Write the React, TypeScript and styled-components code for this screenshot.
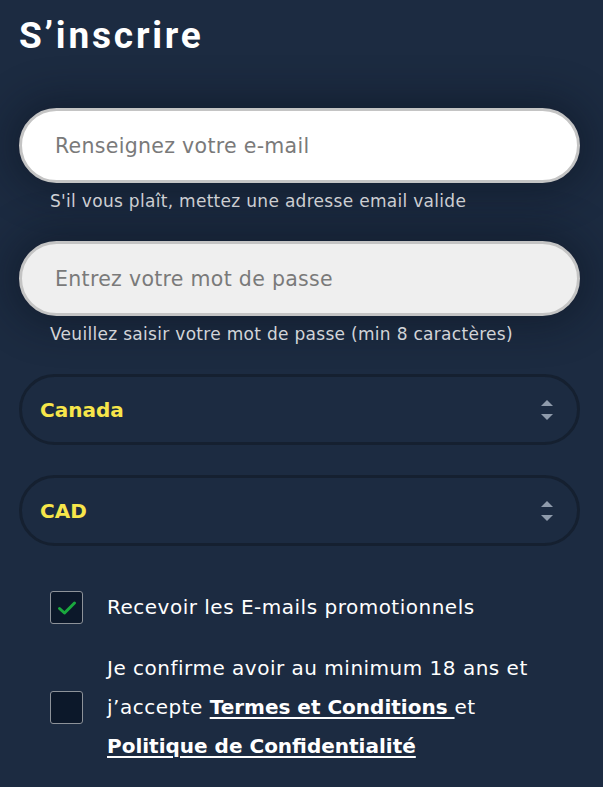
import React from 'react';
import styled, { createGlobalStyle } from 'styled-components';

const GlobalStyle = createGlobalStyle`
  html, body {
    margin: 0;
    padding: 0;
    background: #1c2b41;
  }
  body {
    font-family: "DejaVu Sans", Roboto, sans-serif;
    color: #fff;
  }
`;

const Page = styled.div`
  width: 603px;
  height: 787px;
  overflow: hidden;
  box-sizing: border-box;
  padding: 0 23px 0 19px;
  background: #1c2b41;
`;

const Title = styled.h1`
  margin: 0;
  padding-top: 14px;
  font-family: Roboto, sans-serif;
  font-size: 37px;
  font-weight: 700;
  letter-spacing: 2.8px;
  line-height: 44px;
  color: #fff;
`;

const Form = styled.form`
  display: flex;
  flex-direction: column;
  margin-top: 50px;
`;

const Field = styled.div<{ $gap?: number }>`
  display: flex;
  flex-direction: column;
  margin-top: ${p => p.$gap ?? 0}px;
`;

const TextInput = styled.input<{ $filled?: boolean }>`
  box-sizing: border-box;
  width: 100%;
  height: 75px;
  border: 3px solid #c4c4c4;
  border-radius: 38px;
  padding: 0 30px 0 33px;
  background: ${p => (p.$filled ? '#efefef' : '#ffffff')};
  box-shadow: 0 0 40px 8px rgba(8, 15, 26, 0.45);
  font-family: "DejaVu Sans", sans-serif;
  font-size: 20.5px;
  letter-spacing: 0.3px;
  color: #333;
  outline: none;
  &::placeholder {
    color: #7a7a7a;
  }
`;

const Hint = styled.p`
  margin: 8px 0 0 31px;
  font-size: 17px;
  letter-spacing: 0.3px;
  line-height: 20px;
  color: #d2d4d8;
`;

const SelectBox = styled.div<{ $gap: number }>`
  box-sizing: border-box;
  display: flex;
  align-items: center;
  justify-content: space-between;
  height: 71px;
  margin-top: ${p => p.$gap}px;
  padding: 0 24px 0 18px;
  border: 3px solid #152030;
  border-radius: 36px;
  background: #1c2b41;
`;

const SelectValue = styled.span`
  font-size: 20px;
  font-weight: 700;
  color: #f7e64a;
`;

const Arrows = () => (
  <svg width="12" height="24" viewBox="0 0 12 24">
    <path d="M6 2 L12 8 L0 8 Z" fill="#8f9bab" />
    <path d="M0 16 L12 16 L6 22 Z" fill="#8f9bab" />
  </svg>
);

const CheckRow = styled.label<{ $gap: number }>`
  display: flex;
  align-items: center;
  gap: 24px;
  margin-top: ${p => p.$gap}px;
  padding-left: 31px;
`;

const Box = styled.span`
  flex-shrink: 0;
  box-sizing: border-box;
  display: flex;
  align-items: center;
  justify-content: center;
  width: 33px;
  height: 33px;
  border: 1px solid #8d9299;
  border-radius: 3px;
  background: #0c182a;
`;

const CheckText = styled.span`
  font-size: 20px;
  letter-spacing: 0.5px;
  line-height: 39px;
  color: #fff;
`;

const Link = styled.a`
  font-weight: 700;
  letter-spacing: 0;
  color: #fff;
  text-decoration: underline;
  text-underline-offset: 3px;
`;

const Tick = () => (
  <svg width="20" height="16" viewBox="0 0 20 16">
    <path d="M2.5 8.5 L7.5 13 L17.5 3" fill="none" stroke="#1aa83e" strokeWidth="3" strokeLinecap="round" strokeLinejoin="round" />
  </svg>
);

export default function App() {
  return (
    <>
      <GlobalStyle />
      <Page>
        <Title>S’inscrire</Title>
        <Form onSubmit={e => e.preventDefault()}>
          <Field>
            <TextInput type="email" placeholder="Renseignez votre e-mail" />
            <Hint>S'il vous plaît, mettez une adresse email valide</Hint>
          </Field>
          <Field $gap={30}>
            <TextInput $filled type="password" placeholder="Entrez votre mot de passe" />
            <Hint>Veuillez saisir votre mot de passe (min 8 caractères)</Hint>
          </Field>
          <SelectBox $gap={30}>
            <SelectValue>Canada</SelectValue>
            <Arrows />
          </SelectBox>
          <SelectBox $gap={30}>
            <SelectValue>CAD</SelectValue>
            <Arrows />
          </SelectBox>
          <CheckRow $gap={42}>
            <Box>
              <Tick />
            </Box>
            <CheckText>Recevoir les E-mails promotionnels</CheckText>
          </CheckRow>
          <CheckRow $gap={22}>
            <Box />
            <CheckText>
              Je confirme avoir au minimum 18 ans et
              <br />
              j’accepte <Link href="#">Termes et Conditions </Link>et
              <br />
              <Link href="#">Politique de Confidentialité</Link>
            </CheckText>
          </CheckRow>
        </Form>
      </Page>
    </>
  );
}
